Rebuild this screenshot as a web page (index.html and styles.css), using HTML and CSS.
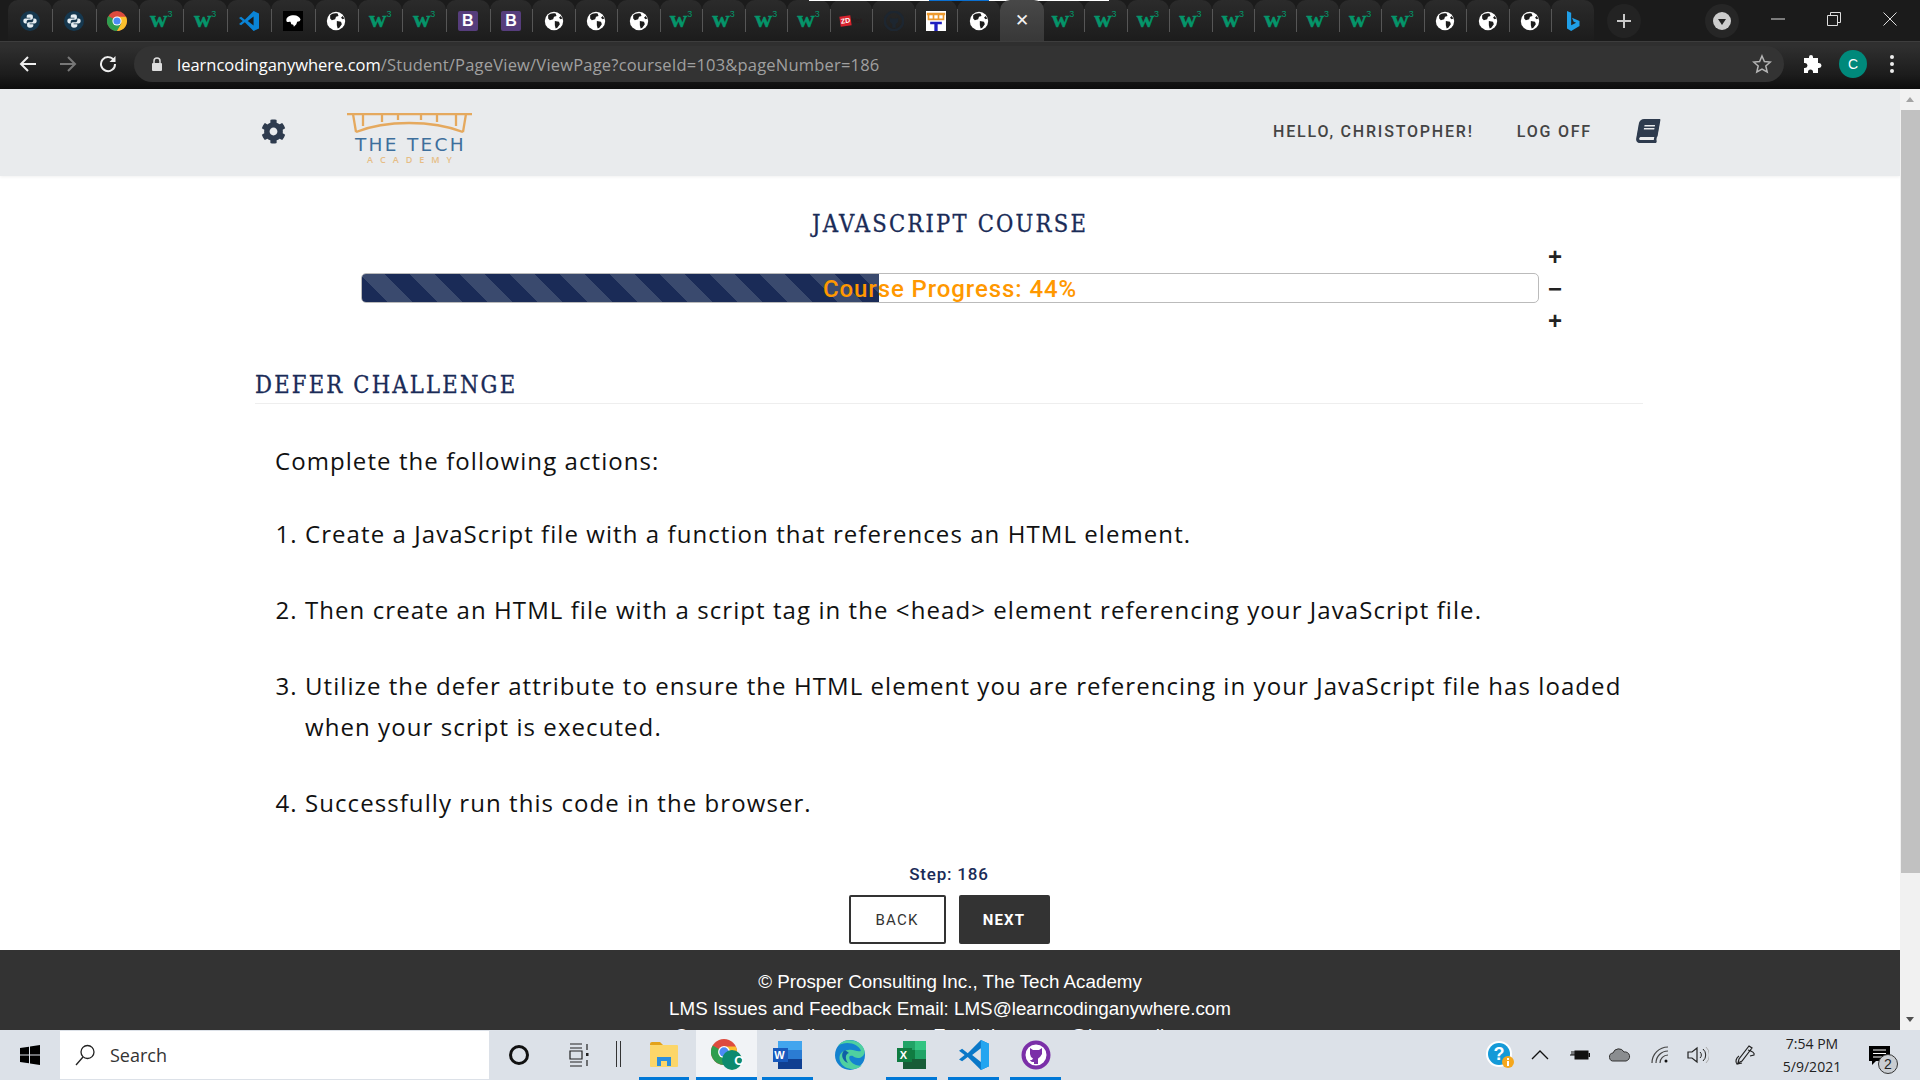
FILE: index.html
```html
<!DOCTYPE html>
<html lang="en">
<head>
    <meta charset="UTF-8">
    <meta name="viewport" content="width=device-width, initial-scale=1.0">
    <title>Defer Challenge</title>
    <link rel="stylesheet" href="styles.css">
</head>
<body>
    <!-- shared icons -->
    <svg class="defs" width="0" height="0">
        <symbol id="i-python" viewBox="0 0 24 24">
            <circle cx="12" cy="12" r="12" fill="#16384f"/>
            <path d="M12 4c-3 0-4 1-4 2.500V8h4.500v1H6.500C5 9 4 10 4 12s1 3 2.500 3H8v-2c0-1.500 1-2.500 2.500-2.500h3c1 0 2-1 2-2V6.500C15.500 5 14.500 4 12 4z" fill="#e6eef3"/>
            <path d="M12 20c3 0 4-1 4-2.500V16h-4.500v-1h6c1.500 0 2.500-1 2.500-3s-1-3-2.500-3H16v2c0 1.500-1 2.500-2.500 2.500h-3c-1 0-2 1-2 2v2C8.500 19 9.500 20 12 20z" fill="#e6eef3"/>
        </symbol>
        <symbol id="i-chrome" viewBox="0 0 24 24">
            <circle cx="12" cy="12" r="12" fill="#dd4b3e"/>
            <path d="M12 12L1.600 6A12 12 0 0 0 12 24l5-8z" fill="#2f9e4f"/>
            <path d="M12 7h10.900A12 12 0 0 1 12 24l5.200-9z" fill="#fbc02d"/>
            <circle cx="12" cy="12" r="5.500" fill="#fff"/>
            <circle cx="12" cy="12" r="4.300" fill="#4c8bf5"/>
        </symbol>
        <symbol id="i-vscode" viewBox="0 0 24 24">
            <path d="M17.500 0L24 3v18l-6.500 3L7 13.500 2.500 17 0 15.500 4.500 12 0 8.500 2.500 7 7 10.500z" fill="#0a84d6"/>
            <path d="M17.500 6.500L10.500 12l7 5.500z" fill="#1b1b1b"/>
        </symbol>
        <symbol id="i-paw" viewBox="0 0 24 24">
            <rect width="24" height="24" fill="#000"/>
            <path d="M4 11c0-4 4-6 9-6 4 0 7 2 8 5 0 2-2 3-4 3l-1 3-3 3c0-2-1-3-3-3l-1-3c-2 0-5 1-5-2z" fill="#fff"/>
        </symbol>
        <symbol id="i-globe" viewBox="0 0 24 24">
            <circle cx="12" cy="12" r="11" fill="#fff"/>
            <path d="M5 5c2-2 6-3 9-2l1 3-3 1-1 3-4 1-2-2zM13 12l5 1 1 3-3 4-2 1-1-4zM20 6l2 3-2 1-2-2z" fill="#1c1c1c"/>
        </symbol>
        <symbol id="i-bing" viewBox="0 0 24 24">
            <path d="M6 0l5 2v15l6-3-3-1-2-5 9 4v6l-10 6-5-3z" fill="#1f9fe8"/>
        </symbol>
        <symbol id="i-vs-task" viewBox="0 0 24 24">
            <path d="M17.500 0L24 3v18l-6.500 3L7 13.500 2.500 17 0 15.500 4.500 12 0 8.500 2.500 7 7 10.500z" fill="#0a78c8"/>
            <path d="M17.500 0L24 3v18l-6.500 3z" fill="#23a5f0"/>
            <path d="M17.500 6.500L10.500 12l7 5.500z" fill="#dde2e8"/>
        </symbol>
    </svg>

    <!-- browser chrome -->
    <div class="tabstrip">
        <div class="top-sliver"><span></span></div>
        <div class="tab"><svg class="ticon"><use href="#i-python"/></svg></div>
        <div class="tab"><svg class="ticon"><use href="#i-python"/></svg></div>
        <div class="tab"><svg class="ticon"><use href="#i-chrome"/></svg></div>
        <div class="tab"><span class="w3">w<sup>3</sup></span></div>
        <div class="tab"><span class="w3">w<sup>3</sup></span></div>
        <div class="tab"><svg class="ticon"><use href="#i-vscode"/></svg></div>
        <div class="tab"><svg class="ticon"><use href="#i-paw"/></svg></div>
        <div class="tab"><svg class="ticon"><use href="#i-globe"/></svg></div>
        <div class="tab"><span class="w3">w<sup>3</sup></span></div>
        <div class="tab"><span class="w3">w<sup>3</sup></span></div>
        <div class="tab"><span class="boot">B</span></div>
        <div class="tab"><span class="boot">B</span></div>
        <div class="tab"><svg class="ticon"><use href="#i-globe"/></svg></div>
        <div class="tab"><svg class="ticon"><use href="#i-globe"/></svg></div>
        <div class="tab"><svg class="ticon"><use href="#i-globe"/></svg></div>
        <div class="tab"><span class="w3">w<sup>3</sup></span></div>
        <div class="tab"><span class="w3">w<sup>3</sup></span></div>
        <div class="tab"><span class="w3">w<sup>3</sup></span></div>
        <div class="tab"><span class="w3">w<sup>3</sup></span></div>
        <div class="tab"><span class="zd"><b>ZD</b>Net</span></div>
        <div class="tab">
            <svg class="ticon" viewBox="0 0 24 24"><circle cx="12" cy="12" r="11" fill="none" stroke="#1d2630" stroke-width="3"/><path d="M7 8l2 1h6l2-1v5l-3 3v4h-4v-4l-3-3z" fill="#1d2630"/></svg>
        </div>
        <div class="tab">
            <svg class="ticon" viewBox="0 0 24 24"><rect width="24" height="24" fill="#fff"/><path d="M1 2h22v3H1zM2 5h2v6H2zM8 5h2v6H8zM14 5h2v6h-2zM20 5h2v6h-2zM2 9h20v2H2z" fill="#ee9a2e"/><path d="M5 13h14v3h-5v8h-4v-8H5z" fill="#2020c0"/></svg>
        </div>
        <div class="tab"><svg class="ticon"><use href="#i-globe"/></svg></div>
        <div class="tab tab-active">&#10005;</div>
        <div class="tab"><span class="w3">w<sup>3</sup></span></div>
        <div class="tab"><span class="w3">w<sup>3</sup></span></div>
        <div class="tab"><span class="w3">w<sup>3</sup></span></div>
        <div class="tab"><span class="w3">w<sup>3</sup></span></div>
        <div class="tab"><span class="w3">w<sup>3</sup></span></div>
        <div class="tab"><span class="w3">w<sup>3</sup></span></div>
        <div class="tab"><span class="w3">w<sup>3</sup></span></div>
        <div class="tab"><span class="w3">w<sup>3</sup></span></div>
        <div class="tab"><span class="w3">w<sup>3</sup></span></div>
        <div class="tab"><svg class="ticon"><use href="#i-globe"/></svg></div>
        <div class="tab"><svg class="ticon"><use href="#i-globe"/></svg></div>
        <div class="tab"><svg class="ticon"><use href="#i-globe"/></svg></div>
        <div class="tab"><svg class="ticon"><use href="#i-bing"/></svg></div>
        <div class="newtab">
            <svg width="16" height="16" viewBox="0 0 16 16"><path d="M8 1v14M1 8h14" stroke="#c9c9c9" stroke-width="2"/></svg>
        </div>
        <div class="tabsearch"><span class="tabsearch-dot"></span></div>
        <div class="winbtns">
            <svg width="14" height="14" viewBox="0 0 14 14"><path d="M0 7h14" stroke="#ddd"/></svg>
            <svg width="14" height="14" viewBox="0 0 14 14"><path d="M3.500 3.500v-3h10v10h-3M.5 3.500h10v10H.5z" fill="none" stroke="#ddd"/></svg>
            <svg width="14" height="14" viewBox="0 0 14 14"><path d="M.5.5l13 13M13.500.5l-13 13" stroke="#ddd"/></svg>
        </div>
    </div>

    <div class="toolbar">
        <svg class="navicon" viewBox="0 0 18 18"><path d="M17 9H3M9 2L2 9l7 7" fill="none" stroke="#eee" stroke-width="2"/></svg>
        <svg class="navicon" viewBox="0 0 18 18"><path d="M1 9h14M9 2l7 7-7 7" fill="none" stroke="#777" stroke-width="2"/></svg>
        <svg class="navicon" viewBox="0 0 18 18"><path d="M15 5.500A7 7 0 1 0 16 9" fill="none" stroke="#eee" stroke-width="2"/><path d="M16.500 1v6h-6z" fill="#eee"/></svg>
        <div class="omnibox">
            <svg class="lock" viewBox="0 0 12 14"><path d="M3 6V4a3 3 0 0 1 6 0v2" fill="none" stroke="#ddd" stroke-width="1.500"/><rect x="1" y="6" width="10" height="8" rx="1" fill="#ddd"/></svg>
            <span class="url"><span class="url-host">learncodinganywhere.com</span>/Student/PageView/ViewPage?courseId=103&amp;pageNumber=186</span>
            <svg class="star" viewBox="0 0 20 20"><path d="M10 2l2.400 5.500 6 .5-4.600 4 1.400 6L10 15l-5.200 3 1.400-6L1.600 8l6-.5z" fill="none" stroke="#b5b5b5" stroke-width="1.500"/></svg>
        </div>
        <svg class="ext" viewBox="0 0 20 20"><path d="M7 3a2 2 0 0 1 4 0v1h5v5h1a2.500 2.500 0 0 1 0 5h-1v5h-5v-1a2.500 2.500 0 0 0-5 0v1H2v-5h1a2.500 2.500 0 0 0 0-5H2V4h5z" fill="#fff"/></svg>
        <div class="avatar">C</div>
        <div class="kebab"><span></span><span></span><span></span></div>
    </div>

    <div class="viewport">
        <div class="page">
            <header class="site-head">
                <svg class="gear" viewBox="0 0 512 512"><path d="M487.400 315.700l-42.600-24.600c4.300-23.200 4.300-47 0-70.200l42.600-24.600c4.900-2.800 7.100-8.600 5.500-14-11.100-35.600-30-67.800-54.700-94.600-3.800-4.100-10-5.100-14.800-2.300L380.800 110c-17.900-15.400-38.500-27.300-60.800-35.100V25.800c0-5.600-3.900-10.500-9.400-11.700-36.700-8.200-74.300-7.800-109.200 0-5.500 1.200-9.400 6.100-9.400 11.700V75c-22.200 7.900-42.800 19.800-60.800 35.100L88.700 85.500c-4.900-2.800-11-1.900-14.800 2.300-24.700 26.700-43.600 58.900-54.700 94.600-1.700 5.400.6 11.200 5.500 14L67.300 221c-4.300 23.200-4.300 47 0 70.200l-42.600 24.600c-4.900 2.800-7.100 8.600-5.500 14 11.100 35.600 30 67.800 54.700 94.600 3.800 4.100 10 5.100 14.800 2.300l42.600-24.600c17.900 15.400 38.500 27.300 60.800 35.100v49.200c0 5.600 3.900 10.500 9.400 11.700 36.700 8.200 74.300 7.800 109.200 0 5.500-1.200 9.400-6.100 9.400-11.700v-49.200c22.200-7.900 42.800-19.800 60.800-35.100l42.600 24.600c4.900 2.800 11 1.900 14.800-2.300 24.700-26.700 43.600-58.900 54.700-94.600 1.500-5.500-.7-11.300-5.600-14.100zM256 336c-44.100 0-80-35.900-80-80s35.900-80 80-80 80 35.900 80 80-35.900 80-80 80z" fill="#2e3b4e"/></svg>
                <div class="logo">
                    <svg class="bridge" viewBox="0 0 125 20"><path d="M0 1h125M6 1l3 18M119 1l-3 18M16 1v12M35 1v8M51 1v6M74 1v6M90 1v8M109 1v12M9 19c30-12 76-12 107 0" fill="none" stroke="#e5a95e" stroke-width="2.300"/></svg>
                    <div class="logo-name">THE TECH</div>
                    <div class="logo-sub">ACADEMY</div>
                </div>
                <nav class="site-nav">
                    <a>HELLO, CHRISTOPHER!</a>
                    <a>LOG OFF</a>
                    <svg class="book" viewBox="0 0 448 512"><path d="M448 360V24c0-13.300-10.700-24-24-24H96C43 0 0 43 0 96v320c0 53 43 96 96 96h328c13.300 0 24-10.700 24-24v-16c0-7.500-3.500-14.300-8.900-18.700-4.200-15.400-4.200-59.300 0-74.700 5.400-4.300 8.900-11.100 8.900-18.600zM128 134c0-3.300 2.700-6 6-6h212c3.300 0 6 2.700 6 6v20c0 3.300-2.700 6-6 6H134c-3.300 0-6-2.700-6-6v-20zm0 64c0-3.300 2.700-6 6-6h212c3.300 0 6 2.700 6 6v20c0 3.300-2.700 6-6 6H134c-3.300 0-6-2.700-6-6v-20zm253.400 250H96c-17.700 0-32-14.300-32-32 0-17.600 14.400-32 32-32h285.400c-1.900 17.100-1.900 46.900 0 64z" fill="#2e3b4e"/></svg>
                </nav>
            </header>

            <h2 class="course-title">JAVASCRIPT COURSE</h2>

            <div class="progress-row">
                <div class="progress">
                    <div class="progress-fill" style="width: 44%"></div>
                    <div class="progress-text">Course Progress: 44%</div>
                </div>
                <div class="progress-tools">
                    <span>+</span>
                    <span>&minus;</span>
                    <span>+</span>
                </div>
            </div>

            <main class="container">
                <h3 class="lesson-title">DEFER CHALLENGE</h3>
                <div class="lesson">
                    <p>Complete the following actions:</p>
                    <ol>
                        <li>Create a JavaScript file with a function that references an HTML element.</li>
                        <li>Then create an HTML file with a script tag in the &lt;head&gt; element referencing your JavaScript file.</li>
                        <li>Utilize the defer attribute to ensure the HTML element you are referencing in your JavaScript file has loaded when your script is executed.</li>
                        <li>Successfully run this code in the browser.</li>
                    </ol>
                </div>
                <div class="step">Step: 186</div>
                <div class="pager">
                    <button class="btn-back">BACK</button>
                    <button class="btn-next">NEXT</button>
                </div>
            </main>

            <footer class="site-foot">
                <p>&copy; Prosper Consulting Inc., The Tech Academy</p>
                <p>LMS Issues and Feedback Email: LMS@learncodinganywhere.com</p>
                <p>Content and Online Instruction Email: Instructor@learncoding.com</p>
            </footer>
        </div>
        <div class="scrollbar">
            <div class="sb-up"></div>
            <div class="sb-thumb"></div>
            <div class="sb-down"></div>
        </div>
    </div>

    <!-- windows taskbar -->
    <div class="taskbar">
        <div class="start">
            <svg width="20" height="20" viewBox="0 0 20 20"><path d="M0 3l9-1.300V9.500H0zM10 1.500L20 0v9.500H10zM0 10.500h9v7.800L0 17zM10 10.500h10V20l-10-1.500z" fill="#000"/></svg>
        </div>
        <div class="searchbox">
            <svg width="20" height="22" viewBox="0 0 20 22"><circle cx="12.500" cy="8" r="6.500" fill="none" stroke="#222" stroke-width="1.300"/><path d="M8 13L1 21" stroke="#222" stroke-width="1.300"/></svg>
            <span>Search</span>
        </div>
        <div class="tb-slot tb-cortana"><span class="cortana"></span></div>
        <div class="tb-slot tb-taskview">
            <svg width="20" height="24" viewBox="0 0 20 24"><path d="M1 1h12M1 23h12M1 5h12M1 19h12M1 8h12v8H1zM18 1v6M18 17v6" fill="none" stroke="#222" stroke-width="1.200"/><rect x="17" y="10" width="2.500" height="3" fill="#222"/></svg>
        </div>
        <div class="tb-split"></div>
        <div class="tb-app tb-on tb-first">
            <svg width="28" height="26" viewBox="0 0 28 26"><path d="M0 2a2 2 0 0 1 2-2h8l3 3h-13z" fill="#e3a21a"/><rect y="3" width="28" height="22" rx="1" fill="#fcd669"/><path d="M7 24v-9h14v9h-4v-5h-6v5z" fill="#2b8fde"/></svg>
        </div>
        <div class="tb-app tb-on tb-active">
            <svg width="32" height="32" viewBox="0 0 32 32"><use href="#i-chrome" width="26" height="26"/><circle cx="21" cy="21" r="10" fill="#0d8a6f"/></svg>
            <span class="tb-c">C</span>
        </div>
        <div class="tb-app tb-on">
            <svg width="30" height="30" viewBox="0 0 30 30"><rect x="5" y="1" width="24" height="9" fill="#41a5ee"/><rect x="5" y="10" width="24" height="9" fill="#2b7cd3"/><rect x="5" y="19" width="24" height="10" fill="#103f91"/><rect y="8" width="15" height="14" fill="#185abd"/></svg>
            <span class="tb-l">W</span>
        </div>
        <div class="tb-app">
            <svg width="30" height="30" viewBox="0 0 30 30"><circle cx="15" cy="15" r="15" fill="#1482cf"/><path d="M3 6C8-2 24-2 29 9c2 5-2 9-6 9-5 0-4-3-8-2-2 1 0 7 6 9 3 1 5 1 6 0-4 6-18 6-22-4C3 15 7 10 13 10c6-1 8 2 13 1C24 4 11 0 3 6z" fill="#4fd0a0"/><path d="M14 13c-4 1-4 6-1 10-6-2-8-10-3-13z" fill="#0f5ea6"/></svg>
        </div>
        <div class="tb-app tb-on">
            <svg width="30" height="30" viewBox="0 0 30 30"><rect x="6" y="1" width="12" height="9" fill="#21a366"/><rect x="18" y="1" width="11" height="9" fill="#33c481"/><rect x="6" y="10" width="12" height="9" fill="#107c41"/><rect x="18" y="10" width="11" height="9" fill="#21a366"/><rect x="6" y="19" width="23" height="10" fill="#185c37"/><rect y="8" width="15" height="14" fill="#107c41"/></svg>
            <span class="tb-l">X</span>
        </div>
        <div class="tb-app tb-on">
            <svg width="30" height="30" viewBox="0 0 30 30"><use href="#i-vs-task" width="30" height="30"/></svg>
        </div>
        <div class="tb-app tb-on">
            <svg width="30" height="30" viewBox="0 0 30 30"><circle cx="15" cy="15" r="14" fill="#fff"/><circle cx="15" cy="15" r="12.500" fill="none" stroke="#7b2fa8" stroke-width="4"/><path d="M9 8l3 2h6l3-2v6l-2 3c-1 1-2 1-2 2v5h-4v-2c-2 0-3 0-4-2l2 0c0-1 1-1 1-1 0-1-1-1-2-2l-1-3z" fill="#7b2fa8"/></svg>
        </div>
        <div class="tray">
            <span class="tray-item tray-help">
                <svg width="28" height="28" viewBox="0 0 28 28"><circle cx="13" cy="13" r="13" fill="#fff"/><circle cx="13" cy="13" r="11" fill="#149ad8"/><circle cx="22" cy="21" r="6" fill="#f5a71c"/><rect x="21" y="20" width="2" height="5" fill="#fff"/><rect x="21" y="17" width="2" height="2" fill="#fff"/></svg>
                <span class="tray-q">?</span>
            </span>
            <span class="tray-item">
                <svg width="18" height="10" viewBox="0 0 18 10"><path d="M1 9l8-8 8 8" fill="none" stroke="#111" stroke-width="1.300"/></svg>
            </span>
            <span class="tray-item">
                <svg width="20" height="14" viewBox="0 0 20 14"><rect x="4.500" y="2.500" width="14" height="9" fill="#111"/><path d="M0 7h5M2 3v4M4 3v4" stroke="#111"/><rect x="18.500" y="5" width="1.500" height="4" fill="#111"/></svg>
            </span>
            <span class="tray-item">
                <svg width="22" height="14" viewBox="0 0 22 14"><path d="M5 13a4 4 0 0 1-1-8 6 6 0 0 1 11-1 4.500 4.500 0 0 1 2 9z" fill="#8a8d90" stroke="#333"/></svg>
            </span>
            <span class="tray-item">
                <svg width="18" height="18" viewBox="0 0 18 18"><path d="M1 17A16 16 0 0 1 17 1M5 17A12 12 0 0 1 17 5M9 17a8 8 0 0 1 8-8" fill="none" stroke="#444" stroke-width="1.200"/><circle cx="15" cy="15" r="1.500" fill="#111"/></svg>
            </span>
            <span class="tray-item tray-vol">
                <svg width="22" height="18" viewBox="0 0 22 18"><path d="M1 6h4l5-4v14l-5-4H1z" fill="none" stroke="#222" stroke-width="1.200"/><path d="M13 6a4 4 0 0 1 0 6" fill="none" stroke="#222"/><path d="M16 3a8 8 0 0 1 0 12" fill="none" stroke="#222"/><path d="M19 1a11 11 0 0 1 0 16" fill="none" stroke="#aaa"/></svg>
            </span>
            <span class="tray-item tray-pen">
                <svg width="22" height="22" viewBox="0 0 22 22"><path d="M15 2l3 2L8 17l-4 2 1-4zM14 6c4 1 7 3 6 5l-4 1M5 12c-3 2-4 6-2 8l5-1" fill="none" stroke="#222" stroke-width="1.200"/></svg>
            </span>
            <div class="clock">
                <div>7:54 PM</div>
                <div>5/9/2021</div>
            </div>
            <div class="notify">
                <svg width="22" height="20" viewBox="0 0 22 20"><path d="M0 0h21v15H7l-4 4v-4H0z" fill="#000"/><path d="M4 4h13M4 7.500h13M4 11h13" stroke="#fff"/></svg>
                <span class="notify-badge">2</span>
            </div>
        </div>
    </div>
</body>
</html>
```

FILE: styles.css
```css
* {
    box-sizing: border-box;
}
html, body {
    margin: 0;
    height: 100%;
}
body {
    display: flex;
    flex-direction: column;
    height: 1080px;
    overflow: hidden;
    font-family: "Liberation Sans", Arial, sans-serif;
    background-color: #fff;
}
.defs {
    position: absolute;
}

/* tabs */
.tabstrip {
    position: relative;
    display: flex;
    height: 41px;
    padding-left: 8px;
    background-color: #1b1b1b;
    flex: none;
}
.top-sliver {
    position: absolute;
    left: 809px;
    top: 0;
    width: 300px;
    height: 1px;
    background-color: #fff;
    z-index: 1;
}
.top-sliver span {
    display: block;
    width: 60px;
    height: 1px;
    margin-left: 120px;
    background-color: #0a6fd0;
}
.tab {
    width: 42.500px;
    height: 41px;
    flex: none;
    display: flex;
    align-items: center;
    justify-content: center;
    background: linear-gradient(#2b2b2b, #1c1c1c);
    border-radius: 10px 10px 0 0;
    position: relative;
}
.tab:nth-child(-n+12) {
    width: 43.800px;
}
.tab-active ~ .tab {
    width: 42.460px;
}
.tab + .tab::before {
    content: "";
    position: absolute;
    left: 0;
    top: 9px;
    bottom: 9px;
    width: 1px;
    background-color: #565656;
}
.ticon {
    width: 20px;
    height: 20px;
}
.tab-active {
    width: 44px;
    margin-right: -2px;
    z-index: 1;
    background: linear-gradient(#484848, #383838);
    color: #f2f2f2;
    font-size: 17px;
}
.tab-active::before, .tab-active + .tab::before {
    display: none;
}
.w3 {
    font-family: "Liberation Serif", serif;
    font-weight: bold;
    font-size: 24px;
    line-height: 20px;
    height: 24px;
    color: #04956a;
    -webkit-text-stroke: 0.5px #04956a;
}
.w3 sup {
    font-family: "Liberation Sans", sans-serif;
    font-weight: normal;
    font-size: 9px;
    line-height: 0;
    vertical-align: 10px;
    -webkit-text-stroke: 0;
}
.boot {
    width: 20px;
    height: 20px;
    border-radius: 2px;
    background-color: #563d7c;
    color: #fff;
    font-size: 16px;
    font-weight: bold;
    line-height: 20px;
    text-align: center;
}
.zd {
    font-size: 7px;
    line-height: 10px;
    color: #2a1a1a;
}
.zd b {
    display: inline-block;
    padding: 0 1px;
    background-color: #d9232e;
    color: #fff;
    transform: rotate(-8deg);
}
.newtab {
    width: 34px;
    height: 34px;
    margin: 4px 0 0 13px;
    border-radius: 50%;
    background-color: #232323;
    display: flex;
    align-items: center;
    justify-content: center;
}
.tabsearch {
    width: 34px;
    height: 34px;
    margin: 4px 0 0 64px;
    border-radius: 50%;
    background-color: #262626;
    display: flex;
    align-items: center;
    justify-content: center;
}
.tabsearch-dot {
    width: 18px;
    height: 18px;
    border-radius: 50%;
    background-color: #ccc;
    position: relative;
}
.tabsearch-dot::after {
    content: "";
    position: absolute;
    left: 5px;
    top: 7px;
    border-left: 4px solid transparent;
    border-right: 4px solid transparent;
    border-top: 6px solid #222;
}
.winbtns {
    display: flex;
    gap: 42px;
    margin: 12px 0 0 32px;
}

/* address bar */
.toolbar {
    display: flex;
    align-items: center;
    height: 48px;
    flex: none;
    padding: 0 0 3px 19px;
    background: linear-gradient(#2f2f2f 10%, #1c1c1c 70%, #0d0d0d);
    border-top: 1px solid #3d3d3d;
}
.navicon {
    width: 18px;
    height: 18px;
    margin-right: 22px;
}
.omnibox {
    display: flex;
    align-items: center;
    width: 1650px;
    height: 36px;
    margin-left: -5px;
    padding: 0 12px 0 17px;
    background-color: #333;
    border-radius: 18px;
}
.lock {
    width: 12px;
    height: 14px;
    margin-right: 14px;
}
.url {
    flex: 1;
    font-family: "Open Sans", sans-serif;
    font-size: 16.500px;
    letter-spacing: 0.2px;
    color: #a0a0a0;
}
.url-host {
    letter-spacing: 0;
    color: #fff;
}
.star {
    width: 20px;
    height: 20px;
}
.ext {
    width: 20px;
    height: 20px;
    margin-left: 18px;
}
.avatar {
    width: 28px;
    height: 28px;
    margin-left: 17px;
    border-radius: 50%;
    background-color: #00897b;
    color: #fff;
    font-size: 14px;
    line-height: 28px;
    text-align: center;
}
.kebab {
    display: flex;
    flex-direction: column;
    gap: 3px;
    margin-left: 23px;
}
.kebab span {
    width: 4px;
    height: 4px;
    border-radius: 50%;
    background-color: #eee;
}

/* page */
.viewport {
    display: flex;
    height: 941px;
    flex: none;
    overflow: hidden;
}
.page {
    flex: 1;
    min-width: 0;
    height: 941px;
    overflow: hidden;
}
.scrollbar {
    width: 20px;
    flex: none;
    display: flex;
    flex-direction: column;
    background-color: #f1f1f1;
    padding-left: 1px;
}
.sb-up, .sb-down {
    height: 21px;
    flex: none;
    position: relative;
}
.sb-up::after, .sb-down::after {
    content: "";
    position: absolute;
    left: 5px;
    top: 8px;
    border-left: 4.500px solid transparent;
    border-right: 4.500px solid transparent;
}
.sb-up::after {
    border-bottom: 5px solid #a3a3a3;
}
.sb-down {
    margin-top: auto;
}
.sb-down::after {
    border-top: 5px solid #505050;
}
.sb-thumb {
    height: 763px;
    background-color: #c1c1c1;
}
.site-head {
    display: flex;
    align-items: flex-start;
    height: 87px;
    padding-left: 261px;
    background-color: #e9ebed;
    box-shadow: 0 1px 3px rgba(0, 0, 0, 0.06);
}
.gear {
    width: 25px;
    height: 27px;
    margin-top: 29px;
}
.logo {
    width: 125px;
    margin: 24px 0 0 61px;
    text-align: center;
}
.bridge {
    display: block;
    width: 125px;
    height: 20px;
}
.logo-name {
    margin-top: 2px;
    margin-right: -2px;
    font-family: "DejaVu Sans", sans-serif;
    font-size: 18.500px;
    line-height: 19px;
    letter-spacing: 2.300px;
    white-space: nowrap;
    color: #3e6f9c;
}
.logo-sub {
    font-family: "Open Sans", sans-serif;
    font-size: 9px;
    font-weight: 600;
    line-height: 11px;
    letter-spacing: 7px;
    margin-right: -7px;
    color: #e6bd85;
}
.site-nav {
    display: flex;
    align-items: center;
    margin: 31px 0 0 auto;
    padding-right: 241px;
    gap: 43px;
    font-family: "Roboto", sans-serif;
    font-size: 16px;
    font-weight: 500;
    letter-spacing: 1.800px;
    color: #444;
}
.book {
    width: 22px;
    height: 24px;
    margin: -1px 0 0 2px;
    transform: skewX(-10deg);
}
.course-title, .lesson-title {
    font-family: "DejaVu Serif", serif;
    font-stretch: condensed;
    font-size: 23.500px;
    font-weight: normal;
    line-height: 30px;
    letter-spacing: 2.200px;
    color: #1a2b57;
    -webkit-text-stroke: 0.3px #1a2b57;
}
.course-title {
    margin: 33px 0 0;
    text-align: center;
}
.progress-row {
    display: flex;
    align-items: flex-start;
    margin: 1px 0 0 361px;
}
.progress {
    position: relative;
    width: 1178px;
    height: 30px;
    flex: none;
    margin-top: 33px;
    border: 1px solid #bbb;
    border-radius: 5px;
    overflow: hidden;
}
.progress-fill {
    height: 100%;
    background: repeating-linear-gradient(45deg, #1a2b57 0 17.700px, #3a4a6e 17.700px 35.400px);
}
.progress-text {
    position: absolute;
    left: 0;
    right: 0;
    top: 0;
    font-family: "Roboto", sans-serif;
    font-weight: 500;
    font-size: 24px;
    line-height: 30px;
    letter-spacing: 0.900px;
    text-align: center;
    color: #ff9800;
}
.progress-tools {
    display: flex;
    flex-direction: column;
    margin: 1px 0 0 9px;
    font-size: 24px;
    font-weight: bold;
    line-height: 32px;
    color: #222;
}
.container {
    width: 1388px;
    margin: 33px 0 0 255px;
}
.lesson-title {
    margin: 0;
    padding-bottom: 3px;
    border-bottom: 1px solid #eee;
}
.lesson {
    padding-left: 20px;
    font-family: "Open Sans", sans-serif;
    font-size: 24px;
    line-height: 41px;
    letter-spacing: 1.070px;
    color: #111;
}
.lesson p {
    margin: 36px 0 0;
}
.lesson ol {
    margin: 32px 0 0;
    padding-left: 30px;
}
.lesson li {
    margin-bottom: 35px;
}
.step {
    margin-top: 41px;
    font-family: "Roboto", sans-serif;
    font-size: 17px;
    font-weight: 500;
    letter-spacing: 0.800px;
    line-height: 20px;
    text-align: center;
    color: #1a2b57;
}
.pager {
    display: flex;
    justify-content: center;
    gap: 13px;
    margin-top: 11px;
}
.pager button {
    height: 49px;
    font-family: "Roboto", sans-serif;
    font-size: 15px;
    letter-spacing: 1.200px;
    border-radius: 2px;
}
.btn-back {
    width: 97px;
    background-color: #fff;
    color: #333;
    border: 2px solid #333;
}
.btn-next {
    width: 91px;
    background-color: #333;
    color: #fff;
    border: none;
    font-weight: bold;
}
.site-foot {
    margin-top: 6px;
    padding-top: 18px;
    height: 120px;
    background-color: #333;
    color: #fff;
    font-size: 18.800px;
    line-height: 27px;
    text-align: center;
}
.site-foot p {
    margin: 0;
}

/* taskbar */
.taskbar {
    display: flex;
    align-items: stretch;
    height: 50px;
    flex: none;
    background-color: #dce1e8;
}
.start {
    width: 60px;
    display: flex;
    align-items: center;
    justify-content: center;
}
.searchbox {
    display: flex;
    align-items: center;
    gap: 15px;
    width: 429px;
    margin: 1px 0;
    padding-left: 15px;
    background-color: #fff;
    font-family: "Open Sans", sans-serif;
    font-size: 18px;
    color: #333;
}
.tb-slot {
    display: flex;
    align-items: center;
    justify-content: center;
}
.tb-cortana {
    width: 60px;
}
.cortana {
    width: 20px;
    height: 20px;
    border: 3px solid #111;
    border-radius: 50%;
}
.tb-taskview {
    width: 60px;
}
.tb-split {
    width: 5px;
    height: 26px;
    margin: 11px 0 0 7px;
    border-left: 1px solid #333;
    border-right: 1px solid #333;
}
.tb-app {
    position: relative;
    width: 51px;
    margin-left: 11px;
    display: flex;
    align-items: center;
    justify-content: center;
}
.tb-app.tb-on::after {
    content: "";
    position: absolute;
    left: 0;
    right: 0;
    bottom: 0;
    height: 3px;
    background-color: #0078d7;
}
.tb-first {
    width: 50px;
    margin-left: 18px;
}
.tb-active {
    width: 61px;
    margin-left: 7px;
    background-color: #f1f3f6;
}
.tb-active + .tb-app {
    margin-left: 5px;
}
.tb-c, .tb-l {
    position: absolute;
    font-weight: bold;
    color: #fff;
    line-height: 14px;
}
.tb-c {
    left: 33px;
    top: 24px;
    width: 20px;
    font-size: 13px;
    text-align: center;
}
.tb-l {
    left: 10px;
    top: 18px;
    width: 15px;
    font-size: 11px;
    text-align: center;
}
.tray {
    display: flex;
    align-items: center;
    margin-left: auto;
    color: #222;
}
.tray-item {
    width: 40px;
    display: flex;
    justify-content: center;
}
.tray-help {
    position: relative;
}
.tray-q {
    position: absolute;
    left: 6px;
    top: 2px;
    width: 26px;
    font-weight: bold;
    font-size: 18px;
    line-height: 22px;
    text-align: center;
    color: #fff;
}
.tray-vol {
    margin-left: -2px;
}
.tray-pen {
    margin-left: 7px;
}
.clock {
    width: 86px;
    margin-left: 4px;
    font-family: "Open Sans", sans-serif;
    font-size: 14px;
    line-height: 23px;
    text-align: center;
}
.notify {
    position: relative;
    width: 65px;
    padding: 2px 0 0 14px;
}
.notify svg {
    display: block;
}
.notify-badge {
    position: absolute;
    left: 23px;
    top: 10px;
    width: 20px;
    height: 20px;
    border: 1px solid #333;
    border-radius: 50%;
    background-color: #c9cdd2;
    font-size: 14px;
    line-height: 18px;
    text-align: center;
}
```
